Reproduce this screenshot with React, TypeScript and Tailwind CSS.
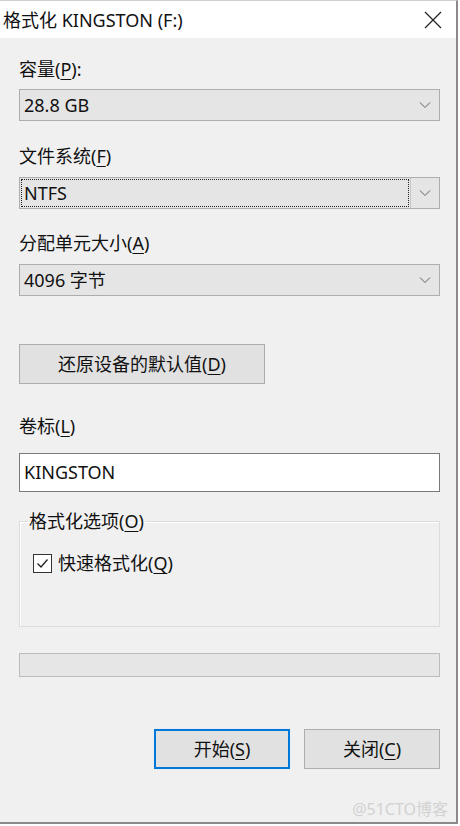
import React from "react";

const FONT = {
  fontFamily: '"Noto Sans", "Noto Sans CJK SC", sans-serif',
};

function Key({ k }: { k: string }) {
  return <span className="underline underline-offset-[3px] decoration-1">{k}</span>;
}

function Chevron() {
  return (
    <svg width="12" height="8" viewBox="0 0 12 8" className="text-[#606060]">
      <path d="M1 1.5 L6 6.5 L11 1.5" fill="none" stroke="currentColor" strokeWidth="1" />
    </svg>
  );
}

function Combo({ value, focused = false }: { value: string; focused?: boolean }) {
  return (
    <div className="flex h-[32px] w-[421px] items-stretch border border-[#adadad] bg-[#e5e5e5]">
      <div className="flex flex-1 items-center p-[1px]">
        <div
          className={
            "flex h-full w-full items-center pl-[2px] " +
            (focused ? "border border-dotted border-[#222]" : "border border-transparent")
          }
        >
          {value}
        </div>
      </div>
      <div
        className={
          "flex w-[29px] items-center justify-center " +
          (focused ? "border-l border-[#c8c8c8]" : "")
        }
      >
        <Chevron />
      </div>
    </div>
  );
}

export default function App() {
  return (
    <div className="h-[826px] w-[460px] bg-white text-[18px] text-[#111]" style={FONT}>
      <div className="flex h-[824px] w-[458px] flex-col border-r-2 border-b-2 border-t border-[#8a8a8a] border-t-[#cfcfcf] bg-[#f0f0f0]">
        {/* title bar */}
        <div className="flex h-[37px] shrink-0 items-center justify-between bg-white pl-[3px] pr-[14px]">
          <span className="text-[18px] leading-none">格式化 KINGSTON (F:)</span>
          <svg width="18" height="18" viewBox="0 0 18 18">
            <path d="M1 1 L17 17 M17 1 L1 17" stroke="#222" strokeWidth="1.2" fill="none" />
          </svg>
        </div>

        <div className="flex flex-col pl-[19px]">
          <div className="mt-[19px] h-[24px] leading-[24px]">
            容量(<Key k="P" />):
          </div>
          <div className="mt-[8px]">
            <Combo value="28.8 GB" />
          </div>

          <div className="mt-[23px] h-[24px] leading-[24px]">
            文件系统(<Key k="F" />)
          </div>
          <div className="mt-[9px]">
            <Combo value="NTFS" focused />
          </div>

          <div className="mt-[22px] h-[24px] leading-[24px]">
            分配单元大小(<Key k="A" />)
          </div>
          <div className="mt-[9px]">
            <Combo value="4096 字节" />
          </div>

          <button className="mt-[48px] flex h-[40px] w-[246px] items-center justify-center border border-[#adadad] bg-[#e1e1e1]">
            还原设备的默认值(<Key k="D" />)
          </button>

          <div className="mt-[30px] h-[24px] leading-[24px]">
            卷标(<Key k="L" />)
          </div>
          <div className="mt-[15px] flex h-[39px] w-[421px] items-center border border-[#7a7a7a] bg-white pl-[4px]">
            KINGSTON
          </div>

          <fieldset className="mt-[17px] h-[118px] w-[421px] border border-[#dcdcdc] px-[8px] shadow-[inset_1px_1px_0_#ffffff]">
            <legend className="px-[1px] leading-[24px]">
              格式化选项(<Key k="O" />)
            </legend>
            <label className="mt-[18px] flex items-center gap-[6px] pl-[5px]">
              <span className="flex h-[19px] w-[19px] items-center justify-center border border-[#333] bg-white">
                <svg width="15" height="15" viewBox="0 0 15 15">
                  <path d="M2.5 7.5 L6 11 L12.5 3.5" fill="none" stroke="#222" strokeWidth="1.3" />
                </svg>
              </span>
              <span className="leading-[24px]">
                快速格式化(<Key k="Q" />)
              </span>
            </label>
          </fieldset>

          <div className="mt-[26px] h-[24px] w-[421px] border border-[#bcbcbc] bg-[#e6e6e6]" />

          <div className="mt-[52px] flex w-[421px] justify-end gap-[14px]">
            <button className="flex h-[40px] w-[136px] items-center justify-center border-2 border-[#0078d7] bg-[#e1e1e1] shadow-[0_0_2px_#cfe6fa]">
              开始(<Key k="S" />)
            </button>
            <button className="flex h-[40px] w-[136px] items-center justify-center border border-[#adadad] bg-[#e1e1e1]">
              关闭(<Key k="C" />)
            </button>
          </div>

          <div className="mt-[28px] flex w-[429px] justify-end text-[16px] text-[#d2d2d2]">
            @51CTO博客
          </div>
        </div>
      </div>
    </div>
  );
}
